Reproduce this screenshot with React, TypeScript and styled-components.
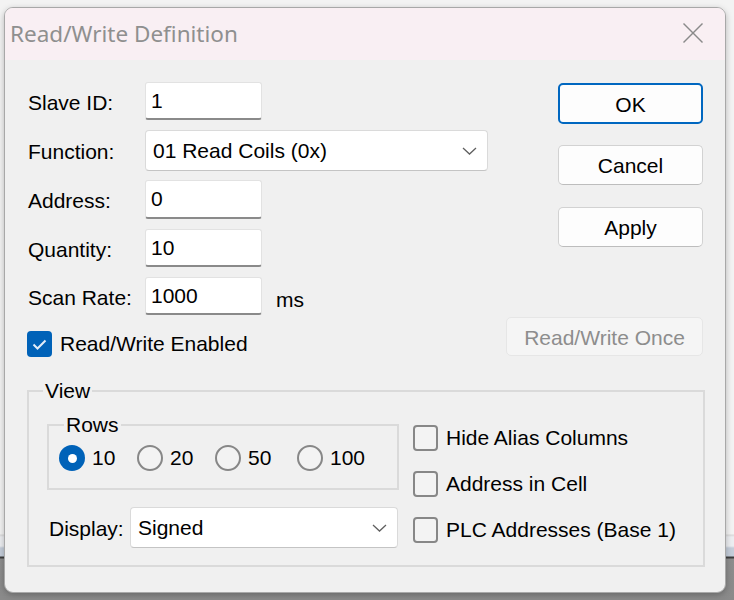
import React from "react";
import styled, { createGlobalStyle } from "styled-components";

const GlobalStyle = createGlobalStyle`
  html, body { margin: 0; padding: 0; }
  body {
    width: 734px;
    height: 600px;
    overflow: hidden;
    background: linear-gradient(
      to bottom,
      #f3f3f3 0px, #f3f3f3 534px,
      #d9d9d9 535px, #eceef1 537px, #eceef1 546px,
      #c4cdd9 548px, #c4cdd9 556px,
      #3d3d3d 557px, #3d3d3d 558px,
      #8d8d8d 559px, #8a8a8a 100%
    );
    font-family: "Liberation Sans", Arial, sans-serif;
  }
`;

const Dialog = styled.div`
  box-sizing: border-box;
  margin: 7px 0 0 4px;
  width: 722px;
  height: 586px;
  border: 1px solid #a8a8a8;
  border-radius: 9px;
  background: #f0f0f0;
  overflow: hidden;
  display: flex;
  flex-direction: column;
  box-shadow: 0 2px 6px rgba(0, 0, 0, 0.25);
`;

const TitleBar = styled.div`
  box-sizing: border-box;
  height: 52px;
  flex: none;
  background: #f9eff3;
  display: flex;
  align-items: center;
  justify-content: space-between;
  padding: 0 22px 0 5px;
`;

const Title = styled.span`
  font-family: "Noto Sans", "Open Sans", sans-serif;
  font-size: 22.5px;
  color: #8f8f8f;
  padding-bottom: 2px;
`;

const CloseIcon = styled.svg`
  width: 20px;
  height: 20px;
  margin-bottom: 2px;
`;

const Body = styled.div`
  display: flex;
  flex-direction: column;
  padding: 22px 20px 0 22px;
`;

const Main = styled.div`
  display: flex;
  justify-content: space-between;
`;

const LeftCol = styled.div`
  display: flex;
  flex-direction: column;
`;

const FormRow = styled.div<{ $mt: number; $h: number }>`
  display: grid;
  grid-template-columns: 118px auto auto;
  justify-content: start;
  align-items: center;
  height: ${(p) => p.$h}px;
  margin-top: ${(p) => p.$mt}px;
`;

const Label = styled.span`
  font-size: 21px;
  color: #000;
  padding: 3px 0 0 1px;
`;

const TextBox = styled.input`
  box-sizing: border-box;
  width: 117px;
  height: 100%;
  background: #fff;
  border: 1px solid #e2e2e2;
  border-bottom: 2px solid #8a8a8a;
  border-radius: 3px;
  font-family: "Liberation Sans", Arial, sans-serif;
  font-size: 21px;
  color: #000;
  padding: 0 5px;
  outline: none;
`;

const Unit = styled.span`
  font-size: 21px;
  color: #000;
  margin-left: 14px;
  padding-top: 8px;
`;

const Combo = styled.div<{ $w: number }>`
  box-sizing: border-box;
  width: ${(p) => p.$w}px;
  height: 41px;
  background: #fff;
  border: 1px solid #dadada;
  border-bottom-color: #c4c4c4;
  border-radius: 4px;
  display: flex;
  align-items: center;
  justify-content: space-between;
  padding: 0 10px 0 7px;
  font-size: 21px;
  color: #000;
`;

const Chevron = styled.svg`
  width: 15px;
  height: 8px;
`;

const CheckRow = styled.label<{ $mt?: number }>`
  display: flex;
  align-items: center;
  gap: 8px;
  margin-top: ${(p) => p.$mt ?? 0}px;
  font-size: 21px;
  color: #000;
`;

const CheckBox = styled.span<{ $checked?: boolean }>`
  box-sizing: border-box;
  width: 25px;
  height: 26px;
  border-radius: 4px;
  display: flex;
  align-items: center;
  justify-content: center;
  background: ${(p) => (p.$checked ? "#0062b8" : "#f3f3f3")};
  border: ${(p) => (p.$checked ? "none" : "2px solid #878787")};
  flex: none;
`;

const RightCol = styled.div`
  display: flex;
  flex-direction: column;
  align-items: flex-end;
  padding: 1px 2px 0 0;
`;

const Button = styled.button<{ $w?: number; $h?: number; $mt?: number; $default?: boolean }>`
  box-sizing: border-box;
  width: ${(p) => p.$w ?? 145}px;
  height: ${(p) => p.$h ?? 41}px;
  margin-top: ${(p) => p.$mt ?? 0}px;
  background: #fdfdfd;
  border: ${(p) => (p.$default ? "2px solid #0067c0" : "1px solid #d2d2d2")};
  border-bottom-color: ${(p) => (p.$default ? "#0067c0" : "#bdbdbd")};
  border-radius: 5px;
  font-family: "Liberation Sans", Arial, sans-serif;
  font-size: 21px;
  color: #000;
  padding: 2px 0 0 0;

  &:disabled {
    background: #f5f5f5;
    border: 1px solid #e6e6e6;
    color: #8d8d8d;
  }
`;

const GroupBox = styled.fieldset<{ $w?: number; $mt: number }>`
  box-sizing: border-box;
  margin: ${(p) => p.$mt}px 0 0 0;
  padding: 0;
  border: 2px solid #dadada;
  min-width: 0;
  ${(p) => (p.$w ? `width: ${p.$w}px;` : "")}
`;

const Legend = styled.legend<{ $indent: number }>`
  margin-left: ${(p) => p.$indent}px;
  padding: 0 2px;
  font-size: 21px;
  line-height: 22px;
  color: #000;
`;

const ViewContent = styled.div`
  display: flex;
  gap: 14px;
  padding: 0 0 17px 18px;
`;

const ViewLeft = styled.div`
  display: flex;
  flex-direction: column;
`;

const RadioRow = styled.div`
  display: grid;
  grid-template-columns: 78px 78px 82px auto;
  align-items: center;
  padding: 9px 0 17px 10px;
`;

const RadioItem = styled.label`
  display: flex;
  align-items: center;
  gap: 7px;
  font-size: 21px;
  color: #000;
`;

const Radio = styled.span<{ $checked?: boolean }>`
  box-sizing: border-box;
  width: 26px;
  height: 26px;
  border-radius: 50%;
  flex: none;
  display: flex;
  align-items: center;
  justify-content: center;
  background: ${(p) => (p.$checked ? "#0062b8" : "#f3f3f3")};
  border: ${(p) => (p.$checked ? "none" : "2px solid #878787")};

  &::after {
    content: "";
    display: ${(p) => (p.$checked ? "block" : "none")};
    width: 9px;
    height: 9px;
    border-radius: 50%;
    background: #fff;
  }
`;

const DisplayRow = styled.div`
  display: grid;
  grid-template-columns: 82px auto;
  align-items: center;
  margin-top: 17px;
  padding-left: 1px;
`;

const CheckList = styled.div`
  display: flex;
  flex-direction: column;
  gap: 20px;
  margin-top: 23px;
`;

const ChevronIcon = () => (
  <Chevron viewBox="0 0 15 8">
    <polyline points="1,1 7.5,7 14,1" fill="none" stroke="#606060" strokeWidth="1.3" />
  </Chevron>
);

const CheckMark = () => (
  <svg width="25" height="26" viewBox="0 0 25 26">
    <polyline points="6.5,13.5 10.5,17.5 18.5,9.5" fill="none" stroke="#e3edf8" strokeWidth="2" />
  </svg>
);

export default function App() {
  return (
    <>
      <GlobalStyle />
      <Dialog>
        <TitleBar>
          <Title>Read/Write Definition</Title>
          <CloseIcon viewBox="0 0 20 20">
            <line x1="0.5" y1="0.5" x2="19.5" y2="19.5" stroke="#8a8a8a" strokeWidth="1.4" />
            <line x1="19.5" y1="0.5" x2="0.5" y2="19.5" stroke="#8a8a8a" strokeWidth="1.4" />
          </CloseIcon>
        </TitleBar>
        <Body>
          <Main>
            <LeftCol>
              <FormRow $mt={0} $h={38}>
                <Label>Slave ID:</Label>
                <TextBox defaultValue="1" readOnly />
              </FormRow>
              <FormRow $mt={10} $h={41}>
                <Label>Function:</Label>
                <Combo $w={343}>
                  <span>01 Read Coils (0x)</span>
                  <ChevronIcon />
                </Combo>
              </FormRow>
              <FormRow $mt={9} $h={39}>
                <Label>Address:</Label>
                <TextBox defaultValue="0" readOnly />
              </FormRow>
              <FormRow $mt={10} $h={38}>
                <Label>Quantity:</Label>
                <TextBox defaultValue="10" readOnly />
              </FormRow>
              <FormRow $mt={10} $h={38}>
                <Label>Scan Rate:</Label>
                <TextBox defaultValue="1000" readOnly />
                <Unit>ms</Unit>
              </FormRow>
              <CheckRow $mt={16}>
                <CheckBox $checked>
                  <CheckMark />
                </CheckBox>
                Read/Write Enabled
              </CheckRow>
            </LeftCol>
            <RightCol>
              <Button $default>OK</Button>
              <Button $mt={21} $h={40}>Cancel</Button>
              <Button $mt={22} $h={40}>Apply</Button>
              <Button $mt={70} $w={197} $h={39} disabled>
                Read/Write Once
              </Button>
            </RightCol>
          </Main>
          <GroupBox $mt={23}>
            <Legend $indent={14}>View</Legend>
            <ViewContent>
              <ViewLeft>
                <GroupBox $mt={12} $w={352}>
                  <Legend $indent={15}>Rows</Legend>
                  <RadioRow>
                    <RadioItem>
                      <Radio $checked />
                      10
                    </RadioItem>
                    <RadioItem>
                      <Radio />
                      20
                    </RadioItem>
                    <RadioItem>
                      <Radio />
                      50
                    </RadioItem>
                    <RadioItem>
                      <Radio />
                      100
                    </RadioItem>
                  </RadioRow>
                </GroupBox>
                <DisplayRow>
                  <Label>Display:</Label>
                  <Combo $w={268}>
                    <span>Signed</span>
                    <ChevronIcon />
                  </Combo>
                </DisplayRow>
              </ViewLeft>
              <CheckList>
                <CheckRow>
                  <CheckBox />
                  Hide Alias Columns
                </CheckRow>
                <CheckRow>
                  <CheckBox />
                  Address in Cell
                </CheckRow>
                <CheckRow>
                  <CheckBox />
                  PLC Addresses (Base 1)
                </CheckRow>
              </CheckList>
            </ViewContent>
          </GroupBox>
        </Body>
      </Dialog>
    </>
  );
}
